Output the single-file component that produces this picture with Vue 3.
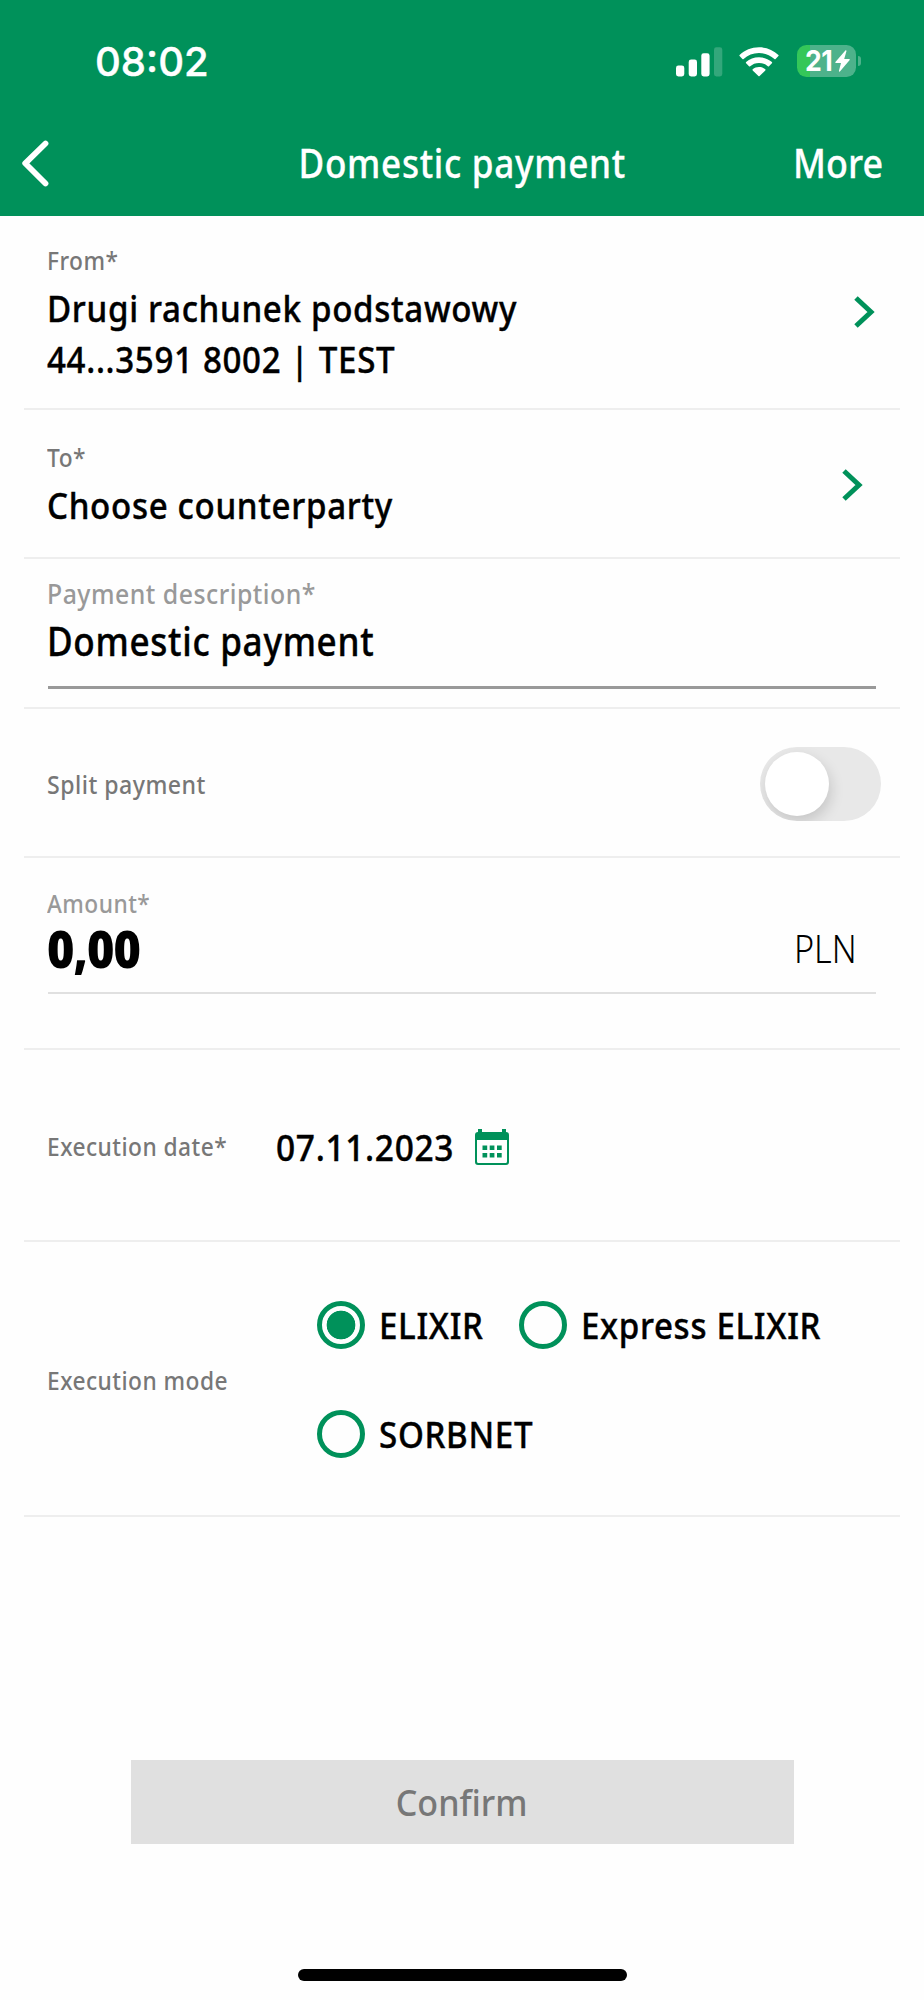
<template>
  <div class="page-container">
    <header class="header-bar">
      <div class="status-bar">
        <span class="clock">08:02</span>
        <div class="status-icons">
          <svg class="signal" width="47" height="30" viewBox="0 0 47 30">
            <rect x="0" y="18.5" width="8.3" height="11" rx="2.4" />
            <rect x="12.7" y="12.5" width="8.3" height="17" rx="2.4" />
            <rect x="25.3" y="6.3" width="8.3" height="23.2" rx="2.4" />
            <rect x="38" y="0.3" width="8.3" height="29.2" rx="2.4" opacity="0.2" />
          </svg>
          <svg class="wifi" width="40" height="30" viewBox="0 0 40 30">
            <path d="M20 0.3C27.6 0.3 34.4 3.2 39.4 7.9Q39.9 8.5 39.4 9.1L36.6 12Q36 12.6 35.4 12C31.3 8.3 26 6 20 6S8.7 8.3 4.6 12Q4 12.6 3.4 12L0.6 9.1Q0.1 8.5 0.6 7.9C5.6 3.2 12.4 0.3 20 0.3Z" />
            <path d="M20 10.2C25 10.2 29.5 12.1 32.9 15.1Q33.4 15.7 32.9 16.3L30 19.2Q29.4 19.7 28.8 19.2C26.5 17.1 23.4 15.9 20 15.9S13.5 17.1 11.2 19.2Q10.6 19.7 10 19.2L7.1 16.3Q6.6 15.7 7.1 15.1C10.5 12.1 15 10.2 20 10.2Z" />
            <path d="M20 20C22.4 20 24.6 20.8 26.3 22.2Q26.8 22.8 26.3 23.4L20.6 29Q20 29.6 19.4 29L13.7 23.4Q13.2 22.8 13.7 22.2C15.4 20.8 17.6 20 20 20Z" />
          </svg>
          <div class="battery">
            <span class="battery-text">21</span>
            <svg class="bolt" width="15" height="22" viewBox="0 0 15 22">
              <path d="M10.6 0.3L0.4 12Q0 12.9 0.8 13H6L3.9 21Q4 22 4.9 21.5L14.7 9.9Q15 9 14.2 8.9H9.2L11.5 1Q11.4 0 10.6 0.3Z" fill="#fff" />
            </svg>
          </div>
          <span class="battery-cap"></span>
        </div>
      </div>
      <div class="nav-bar">
        <svg class="back" width="28" height="47" viewBox="0 0 28 47">
          <path d="M24.5 3.5L4.2 23.3L24.5 43.5" fill="none" stroke="#fff" stroke-width="5.8" stroke-linecap="round" stroke-linejoin="round" />
        </svg>
        <h1>Domestic payment</h1>
        <span class="more">More</span>
      </div>
    </header>

    <main class="form">
      <section class="row from">
        <div>
          <div class="label">From*</div>
          <div class="value">Drugi rachunek podstawowy</div>
          <div class="value">44...3591 8002 | TEST</div>
        </div>
        <svg class="chevron" width="22" height="34" viewBox="0 0 22 34">
          <path d="M3 3L18 17L3 31" fill="none" stroke="#00915a" stroke-width="5" />
        </svg>
      </section>

      <section class="row to">
        <div>
          <div class="label">To*</div>
          <div class="value">Choose counterparty</div>
        </div>
        <svg class="chevron" width="22" height="34" viewBox="0 0 22 34">
          <path d="M3 3L18 17L3 31" fill="none" stroke="#00915a" stroke-width="5" />
        </svg>
      </section>

      <section class="row description">
        <div class="field">
          <div class="label light">Payment description*</div>
          <div class="value">{{ description }}</div>
        </div>
      </section>

      <section class="row split">
        <div class="label">Split payment</div>
        <div class="toggle" :class="{ on: split }" @click="split = !split">
          <div class="knob"></div>
        </div>
      </section>

      <section class="row amount">
        <div class="field">
          <div class="label light">Amount*</div>
          <div class="amount-line">
            <span class="sum">0,00</span>
            <span class="currency">PLN</span>
          </div>
        </div>
      </section>

      <section class="row date">
        <div class="label">Execution date*</div>
        <div class="value">07.11.2023</div>
        <svg class="calendar" width="34" height="36" viewBox="0 0 34 36">
          <path fill="#00915a" fill-rule="evenodd" d="M3 0H7V3H27V0H31V3Q34 3 34 6V33Q34 36 31 36H3Q0 36 0 33V6Q0 3 3 3ZM2 11V32.5Q2 34 3.5 34H30.5Q32 34 32 32.5V11Z" />
          <path fill="#00915a" d="M7.5 16.5h4.7v4.5H7.5zM14.7 16.5h4.7v4.5h-4.7zM22 16.5h4.7v4.5H22zM7.5 24h4.7v4.5H7.5zM14.7 24h4.7v4.5h-4.7zM22 24h4.7v4.5H22z" />
        </svg>
      </section>

      <section class="row mode">
        <div class="label">Execution mode</div>
        <div class="options">
          <div v-for="m in modes" :key="m" class="option" @click="mode = m">
            <span class="radio" :class="{ checked: mode === m }"></span>
            <span class="value">{{ m }}</span>
          </div>
        </div>
      </section>
    </main>

    <div class="confirm"><span>Confirm</span></div>
    <div class="home-bar"></div>
  </div>
</template>

<script setup>
import { ref } from 'vue'

const description = ref('Domestic payment')
const split = ref(false)
const modes = ['ELIXIR', 'Express ELIXIR', 'SORBNET']
const mode = ref('ELIXIR')
</script>

<style>
body {
  margin: 0;
  background-color: #fefefe;
}
</style>

<style scoped>
.page-container {
  display: flex;
  flex-direction: column;
  width: 924px;
  height: 2000px;
  overflow: hidden;
  background-color: #fefefe;
  font-family: 'Noto Sans', 'Open Sans', sans-serif;
  font-weight: 500;
  color: #000;
}

.page-container * {
  box-sizing: border-box;
}

svg {
  display: block;
  flex: none;
}

/* Green header: status bar and navigation */
.header-bar {
  height: 215.5px;
  flex: none;
  background-color: #00915a;
  color: #fff;
}

.status-bar {
  display: flex;
  justify-content: space-between;
  height: 120px;
  padding: 0 63.5px 0 95px;
}

.clock {
  margin-top: 36px;
  font-family: 'Inter', sans-serif;
  font-size: 40px;
  line-height: 52px;
  font-weight: 500;
  -webkit-text-stroke: 0.4px #fff;
}

.status-icons {
  display: flex;
  align-items: flex-start;
}

.signal {
  margin-top: 46.5px;
  fill: #fff;
}

.wifi {
  margin: 46.5px 0 0 16.5px;
  fill: #fff;
}

.battery {
  display: flex;
  align-items: center;
  width: 59px;
  height: 32px;
  margin: 45px 0 0 17.5px;
  padding-left: 8px;
  border-radius: 9.5px;
  background: linear-gradient(to right, #34c759 13px, #4db28b 13px);
}

.battery-text {
  width: 30px;
  font-family: 'Inter', sans-serif;
  font-size: 29px;
  line-height: 32px;
  font-weight: 700;
  letter-spacing: -0.5px;
  transform: scaleX(0.92);
  transform-origin: left;
}

.battery-cap {
  width: 3px;
  height: 10px;
  margin: 56px 0 0 2px;
  border-radius: 0 5px 5px 0;
  background-color: #4db28b;
}

.nav-bar {
  display: grid;
  grid-template-columns: 160px 1fr 160px;
  padding: 0 41.5px 0 21px;
}

.back {
  margin-top: 20px;
}

h1 {
  margin: 18px 0 0 21px;
  font-size: 39px;
  line-height: 50px;
  font-weight: 500;
  letter-spacing: 0.02em;
  text-align: center;
  white-space: nowrap;
  -webkit-text-stroke: 0.3px #fff;
  transform: scaleX(0.9);
}

.more {
  margin-top: 18px;
  font-size: 39px;
  line-height: 50px;
  text-align: right;
  -webkit-text-stroke: 0.3px #fff;
  transform: scaleX(0.92);
  transform-origin: right;
}

/* Form rows */
.form {
  padding: 0 24px;
}

.row {
  display: flex;
  justify-content: space-between;
  padding: 0 24px;
  border-bottom: 2px solid #eee;
}

/* Slightly narrowed letters with looser tracking */
.label,
.value {
  margin-left: -1px;
  letter-spacing: 0.02em;
  white-space: nowrap;
  transform: scaleX(0.895);
  transform-origin: left;
}

.label {
  font-size: 26px;
  line-height: 36px;
  color: #777;
  transform: scaleX(0.875);
}

.label.light {
  color: #999;
}

.value {
  font-size: 37px;
  line-height: 51.5px;
  -webkit-text-stroke: 0.4px #000;
}

.from {
  height: 194.5px;
  padding-top: 26px;
}

.from .label,
.to .label {
  margin-bottom: 4px;
}

.from .chevron {
  margin: 53px 1px 0 0;
}

.to {
  height: 149px;
  padding-top: 29px;
}

.to .chevron {
  margin: 29px 13px 0 0;
}

.field {
  width: 828px;
}

.description {
  height: 150px;
  padding-top: 16.5px;
}

.description .field {
  height: 113px;
  border-bottom: 3px solid #999;
}

.description .label {
  font-size: 27px;
  margin-bottom: 4px;
  transform: scaleX(0.92);
}

.description .value {
  font-size: 39px;
  line-height: 50px;
  transform: scaleX(0.9);
}

.split {
  height: 149px;
  align-items: center;
  padding-top: 2px;
  padding-right: 19px;
}

.split .label {
  transform: scaleX(0.89);
}

.toggle {
  width: 121px;
  height: 74px;
  padding: 5px;
  border-radius: 37px;
  background-color: #e8e8e8;
  overflow: hidden;
}

.knob {
  width: 64px;
  height: 64px;
  border-radius: 50%;
  background-color: #fff;
  box-shadow: 2px 6px 14px rgba(0, 0, 0, 0.15);
}

.toggle.on {
  background-color: #00915a;
}

.toggle.on .knob {
  margin-left: 47px;
}

.amount {
  height: 192px;
  padding-top: 27px;
}

.amount .field {
  height: 109px;
  padding-top: 2px;
  border-bottom: 2px solid #e0e0e0;
}

.amount .label {
  line-height: 32px;
}

.amount-line {
  display: flex;
  justify-content: space-between;
  margin-top: 1px;
  padding-right: 19px;
}

.sum {
  height: 56px;
  margin-left: -1px;
  font-size: 52px;
  line-height: 56px;
  font-weight: 900;
  letter-spacing: -1px;
  transform: scaleX(0.9);
  transform-origin: left;
}

.currency {
  font-size: 38px;
  line-height: 56px;
  font-weight: 300;
  transform: scaleX(0.9);
  transform-origin: right;
}

.date {
  height: 192px;
  justify-content: flex-start;
}

.date .label {
  width: 230px;
  margin-top: 78px;
}

.date .value {
  width: 199px;
  margin-top: 71px;
  transform: scaleX(0.905);
}

.calendar {
  margin-top: 79px;
}

.mode {
  height: 275px;
  justify-content: flex-start;
}

.mode .label {
  width: 270px;
  margin-top: 120px;
}

.options {
  display: grid;
  grid-template-columns: 202px auto;
  grid-auto-rows: 48px;
  row-gap: 61px;
  margin-top: 59px;
}

.option {
  display: flex;
  align-items: center;
  gap: 15px;
}

.radio {
  width: 48px;
  height: 48px;
  flex: none;
  border: 5px solid #00915a;
  border-radius: 50%;
}

.radio.checked {
  background: radial-gradient(circle, #00915a 14px, transparent 14.7px);
}

.confirm {
  width: 663px;
  height: 84px;
  flex: none;
  margin: 243px 0 0 130.5px;
  background-color: #e0e0e0;
  color: #777;
  font-size: 37px;
  line-height: 84px;
  text-align: center;
}

.confirm span {
  display: inline-block;
  transform: scaleX(0.92);
}

.home-bar {
  width: 329px;
  height: 12px;
  flex: none;
  margin: 125px 0 0 298px;
  border-radius: 6px;
  background-color: #000;
}
</style>
